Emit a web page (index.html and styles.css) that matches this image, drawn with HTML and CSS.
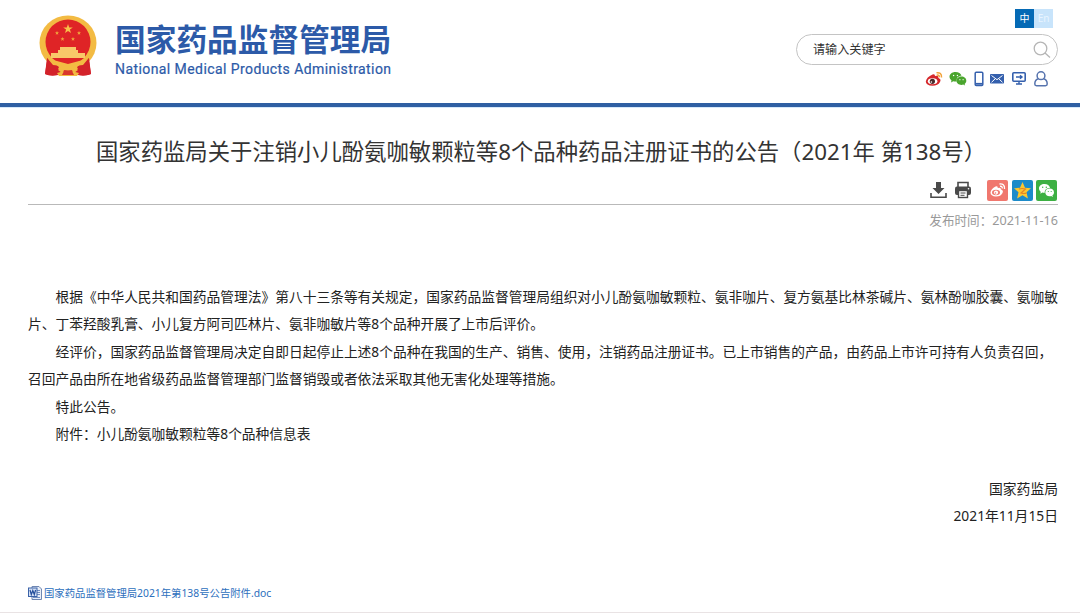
FILE: index.html
```html
<!DOCTYPE html>
<html lang="zh-CN">
<head>
    <meta charset="UTF-8">
    <meta name="viewport" content="width=device-width, initial-scale=1.0">
    <title>国家药品监督管理局</title>
    <link rel="stylesheet" href="styles.css">
</head>
<body>
    <header class="header">
        <div class="logo">
            <svg class="emblem" viewBox="0 0 58 62">
                <path d="M8 46 L50 46 L52 59 Q45 62 39 60 H19 Q12 62 6 59 Z" fill="#d3222a"/>
                <ellipse cx="29" cy="28" rx="28.5" ry="27.5" fill="#f3bb43"/>
                <path d="M8 43 L20 52 L16 60 Q10 61 6 59 Z M50 43 L38 52 L42 60 Q48 61 52 59 Z" fill="#d3222a"/>
                <circle cx="29" cy="27" r="22.5" fill="#df2426"/>
                <path d="M29 9 l1.2 3.4 h3.6 l-2.9 2.2 1.1 3.5 -3 -2.1 -3 2.1 1.1 -3.5 -2.9 -2.2 h3.6z" fill="#f8c04a"/>
                <g fill="#f0a13c">
                    <path id="star" d="M18 16 l.6 1.3 1.4 .1 -1.1 .9 .4 1.4 -1.3 -.8 -1.3 .8 .4 -1.4 -1.1 -.9 1.4 -.1z"/>
                    <use href="#star" x="22"/>
                    <use href="#star" x="5.500" y="6"/>
                    <use href="#star" x="16" y="6"/>
                </g>
                <path d="M21 32 h16 v3 h2 v3 h7 v5 h-34 v-5 h7 v-3 h2z" fill="#f8c869"/>
                <path d="M9 44 Q19 46 29 49 Q39 46 49 44 L44 50 L35 51 L39 55 L35 58 L32 54 H26 L23 58 L19 55 L23 51 L14 50Z" fill="#f3bb43"/>
                <path d="M18 58 Q29 54 40 58 L38 61 H20Z" fill="#f3bb43"/>
                <path d="M25 56 h8 l2 4 h-12z" fill="#d9382b"/>
            </svg>
            <div class="logo-text">
                <div class="name-cn">国家药品监督管理局</div>
                <div class="name-en">National Medical Products Administration</div>
            </div>
        </div>
        <div class="tools">
            <div class="lang">
                <span class="lang-cn">中</span>
                <span class="lang-en">En</span>
            </div>
            <div class="search">
                <span>请输入关键字</span>
                <svg width="18" height="18" viewBox="0 0 18 18" fill="none" stroke="#b5b5b5" stroke-width="1.300">
                    <circle cx="7.500" cy="7.500" r="6.300"/>
                    <path d="M12 12 L17 16.500"/>
                </svg>
            </div>
            <div class="links">
                <svg class="weibo" width="18" height="16" viewBox="0 0 18 16">
                    <path d="M7.500 3.500 Q10 2.300 10 5 Q13.500 3.800 13.500 7 Q16.500 8 15 11 Q13 14.800 7.500 14.800 Q1 14.500 .8 10.500 Q1.500 6 7.500 3.500Z" fill="#d5272b"/>
                    <ellipse cx="7.600" cy="10.200" rx="4.800" ry="3" fill="#fff"/>
                    <circle cx="7.400" cy="10.300" r="2.600" fill="#4a2a2a"/>
                    <circle cx="6.400" cy="11" r=".8" fill="#fff"/>
                    <path d="M11.500 1.800 Q16.800 1 16.500 6.500 M11.800 4 Q14.500 3.700 14.300 6.200" fill="none" stroke="#f2a33a" stroke-width="1.500"/>
                </svg>
                <svg class="wechat" width="18" height="16" viewBox="0 0 18 16">
                    <path d="M6.500 1 C2.800 1 .5 3.200 .5 5.800 c0 1.500 .8 2.700 2 3.600 l-.5 2 2.300-1.200 c1 .3 2.500 .4 3.500 .2 C7 7 9.500 4.800 12.500 4.800 C12 2.500 9.500 1 6.500 1z" fill="#4aa52e"/>
                    <path d="M12.500 5.500 c-2.900 0-5 1.900-5 4.200 s2.100 4.200 5 4.200 c.6 0 1.200-.1 1.700-.3 l1.900 1 -.5-1.700 c1.100-.8 1.700-1.900 1.700-3.200 0-2.300-2.100-4.200-4.800-4.200z" fill="#4aa52e"/>
                    <g fill="#fff"><circle cx="4.600" cy="4.500" r=".7"/><circle cx="8.400" cy="4.500" r=".7"/><circle cx="10.900" cy="8.700" r=".6"/><circle cx="14.100" cy="8.700" r=".6"/></g>
                </svg>
                <svg class="phone" width="10" height="16" viewBox="0 0 10 16">
                    <rect x="1.200" y="1.200" width="7.600" height="13.200" rx="1" fill="none" stroke="#3560ad" stroke-width="1.500"/>
                    <path d="M1.500 12.800 h7" stroke="#3560ad" stroke-width="1.800"/>
                </svg>
                <svg class="mail" width="14" height="16" viewBox="0 0 14 16">
                    <rect x="0" y="3" width="14" height="9.500" rx=".8" fill="#3560ad"/>
                    <path d="M1.500 4.500 L7 8.700 L12.500 4.500 M1.500 11.300 L5 8 M12.500 11.300 L9 8" fill="none" stroke="#fff" stroke-width="1"/>
                </svg>
                <svg class="screen" width="14" height="16" viewBox="0 0 14 16">
                    <rect x=".8" y="1.800" width="12.400" height="8.500" rx="1" fill="none" stroke="#3560ad" stroke-width="1.600"/>
                    <path d="M4 6 h5.500 M8 4.300 l2 1.700 -2 1.700 M7 10.500 v2 M4 13 h6" fill="none" stroke="#3560ad" stroke-width="1.400"/>
                </svg>
                <svg class="user" width="14" height="16" viewBox="0 0 14 16" fill="none" stroke="#5774ae" stroke-width="1.500">
                    <circle cx="7" cy="4.700" r="3.900"/>
                    <path d="M4.500 7.800 Q.8 8.800 .8 13 Q.8 14.700 2.500 14.700 H11.500 Q13.200 14.700 13.200 13 Q13.200 8.800 9.500 7.800"/>
                </svg>
            </div>
        </div>
    </header>

    <main class="article">
        <h1 class="title">国家药监局关于注销小儿酚氨咖敏颗粒等8个品种药品注册证书的公告（2021年 第138号）</h1>
        <div class="actions">
            <svg class="download" width="17" height="18" viewBox="0 0 17 18" fill="#4a4a4a">
                <path d="M6 1 h5 v6 h3.500 L8.500 13 L2.500 7 H6z"/>
                <path d="M1 12 v4.300 h15 V12" fill="none" stroke="#4a4a4a" stroke-width="1.600"/>
            </svg>
            <svg class="print" width="18" height="18" viewBox="0 0 18 18">
                <path d="M4 6 V1.500 H14 V6" fill="none" stroke="#4a4a4a" stroke-width="1.600"/>
                <rect x="1" y="5.500" width="16" height="8.500" rx="2" fill="#4a4a4a"/>
                <rect x="4.500" y="9.500" width="9" height="7" fill="#fff" stroke="#4a4a4a" stroke-width="1.400"/>
                <path d="M6.500 12 h5 M6.500 14.300 h4" stroke="#4a4a4a"/>
                <circle cx="14.500" cy="7.700" r=".8" fill="#fff"/>
            </svg>
            <svg class="share share-weibo" viewBox="0 0 21 21">
                <rect width="21" height="21" rx="2" fill="#f0776e"/>
                <path d="M8.500 6.500 Q11 5.500 10.800 8 Q14 7 14 9.500 Q16.800 10.500 15.500 13 Q13.800 16.500 9 16.500 Q3.500 16.200 3.500 12.500 Q4 9 8.500 6.500Z" fill="#fff"/>
                <ellipse cx="9" cy="12.500" rx="4" ry="2.800" fill="#f0776e"/>
                <circle cx="9" cy="12.600" r="2.100" fill="#fff"/>
                <circle cx="8.500" cy="13" r=".8" fill="#f0776e"/>
                <path d="M12.500 4 Q18 3.500 17.500 9 M13 6.300 Q15.500 6 15.300 8.500" fill="none" stroke="#fff" stroke-width="1.300"/>
            </svg>
            <svg class="share" viewBox="0 0 21 21">
                <rect width="21" height="21" rx="2" fill="#1d8bc9"/>
                <path d="M10.500 2 L13 7.700 L19 8.300 L14.500 12.300 L15.900 18.500 L10.500 15.300 L5.100 18.500 L6.500 12.300 L2 8.300 L8 7.700Z" fill="#fdc72f"/>
                <path d="M7 9 Q10 8 13.500 9 L9 13 Q12 14 14.500 13" fill="none" stroke="#e78525" stroke-width="1.200"/>
            </svg>
            <svg class="share" viewBox="0 0 21 21">
                <rect width="21" height="21" rx="2" fill="#3db043"/>
                <path d="M8.500 4 C5.200 4 3 6 3 8.500 c0 1.400 .7 2.500 1.800 3.300 l-.5 1.900 2.100-1.100 c.8 .2 1.700 .3 2.400 .2 C8.300 9.800 10.700 8 14 8 C13.500 5.500 11.500 4 8.500 4z" fill="#fff"/>
                <path d="M13.700 8.600 c-2.600 0-4.400 1.700-4.400 3.800 s1.800 3.800 4.400 3.800 c.5 0 1-.1 1.500-.2 l1.700 .9 -.5-1.600 c1-.7 1.600-1.700 1.600-2.900 0-2.100-1.800-3.800-4.300-3.800z" fill="#fff"/>
                <g fill="#3db043"><circle cx="6.700" cy="7.300" r=".7"/><circle cx="10.300" cy="7.300" r=".7"/><circle cx="12.300" cy="11.500" r=".6"/><circle cx="15.200" cy="11.500" r=".6"/></g>
            </svg>
        </div>
        <div class="pub-date">发布时间：2021-11-16</div>

        <div class="content">
            <p>根据《中华人民共和国药品管理法》第八十三条等有关规定，国家药品监督管理局组织对小儿酚氨咖敏颗粒、氨非咖片、复方氨基比林茶碱片、氨林酚咖胶囊、氨咖敏<br>片、丁苯羟酸乳膏、小儿复方阿司匹林片、氨非咖敏片等8个品种开展了上市后评价。</p>
            <p>经评价，国家药品监督管理局决定自即日起停止上述8个品种在我国的生产、销售、使用，注销药品注册证书。已上市销售的产品，由药品上市许可持有人负责召回，<br>召回产品由所在地省级药品监督管理部门监督销毁或者依法采取其他无害化处理等措施。</p>
            <p>特此公告。</p>
            <p>附件：小儿酚氨咖敏颗粒等8个品种信息表</p>
        </div>
        <div class="sign">
            <div>国家药监局</div>
            <div>2021年11月15日</div>
        </div>
        <a class="attachment" href="#">
            <svg width="14" height="14" viewBox="0 0 14 14">
                <path d="M4 .5 h7 l2.500 2.500 v10.500 H4z" fill="#e8eef8" stroke="#6f87b2"/>
                <path d="M9 4.500 h3 M9 6.500 h3 M9 8.500 h3 M5 11.500 h7" stroke="#5478b5" stroke-width=".8"/>
                <rect x=".5" y="2" width="8.500" height="8.500" fill="#d5e1f5" stroke="#3b62a8"/>
                <path d="M2 4 l1.300 4.500 1.500-4 1.500 4 L7.600 4" fill="none" stroke="#244f9c" stroke-width="1.200"/>
            </svg>
            <span>国家药品监督管理局2021年第138号公告附件.doc</span>
        </a>
    </main>
</body>
</html>
```
FILE: styles.css
```css
* {
    box-sizing: border-box;
}
body {
    margin: 0;
    height: 613px;
    overflow: hidden;
    background: #fff;
    border-bottom: 1px solid #e9e3e4;
    font-family: "Noto Sans", "Noto Sans CJK SC", sans-serif;
    color: #222;
}
.header {
    display: flex;
    justify-content: space-between;
    height: 108px;
    padding: 0 22px 0 39px;
    border-bottom: 1px solid #d6e8fa;
    box-shadow: inset 0 -4px 0 #2f5fa3;
}
.logo {
    display: flex;
    padding-top: 15px;
}
.emblem {
    width: 58px;
    height: 62px;
}
.logo-text {
    margin-left: 18px;
    padding-top: 3px;
    color: #2c5aa8;
    white-space: nowrap;
}
.name-cn {
    font-family: "Noto Sans CJK SC", sans-serif;
    font-size: 30.7px;
    font-weight: 700;
    line-height: 40px;
}
.name-en {
    margin-top: 2px;
    font-family: Roboto, sans-serif;
    font-size: 14px;
    font-weight: 400;
    line-height: 18px;
    letter-spacing: 0.42px;
    -webkit-text-stroke: 0.2px #2c5aa8;
}
.tools {
    width: 262px;
    padding-top: 9px;
}
.lang {
    display: flex;
    justify-content: flex-end;
    padding-right: 5px;
    font-size: 10px;
    line-height: 18px;
    text-align: center;
    color: #fff;
}
.lang span {
    width: 19px;
    height: 19px;
}
.lang-cn {
    background: #056ab5;
}
.lang-en {
    background: #c8e4fb;
    color: #e8f4ff;
}
.search {
    display: flex;
    align-items: center;
    justify-content: space-between;
    height: 31px;
    margin-top: 6px;
    padding: 0 6px 0 16px;
    border: 1px solid #c4c4c4;
    border-radius: 16px;
    font-size: 12.1px;
    line-height: 28px;
    color: #333;
}
.links {
    display: flex;
    margin-top: 6px;
    padding-left: 129px;
}
.wechat {
    margin-left: 6px;
}
.phone {
    margin-left: 7px;
}
.mail {
    margin-left: 6px;
}
.screen,
.user {
    margin-left: 8px;
}
.article {
    padding: 0 22px 0 28px;
}
.title {
    margin: 0;
    padding-top: 28px;
    padding-left: 68px;
    font-size: 22.35px;
    font-weight: 400;
    line-height: 32px;
    color: #333;
    white-space: nowrap;
}
.actions {
    display: flex;
    justify-content: flex-end;
    align-items: center;
    height: 37px;
    padding: 8px 1px 0 0;
    border-bottom: 1px solid #b9b9b9;
}
.print {
    margin-left: 7px;
}
.share {
    width: 21px;
    height: 21px;
    margin-left: 3.500px;
}
.share-weibo {
    margin-left: 15px;
}
.pub-date {
    height: 31px;
    font-size: 12.6px;
    line-height: 32px;
    text-align: right;
    color: #999;
}
.content {
    padding-top: 47px;
}
.content p {
    margin: 0;
    text-indent: 2em;
    font-size: 13.74px;
    line-height: 27.45px;
    white-space: nowrap;
}
.sign {
    padding-top: 27px;
    font-size: 13.8px;
    line-height: 27.45px;
    text-align: right;
}
.attachment {
    display: flex;
    align-items: center;
    margin-top: 54px;
    font-size: 10.35px;
    line-height: 18px;
    color: #2d6fbd;
    text-decoration: none;
}
.attachment span {
    margin-left: 2px;
}
```
